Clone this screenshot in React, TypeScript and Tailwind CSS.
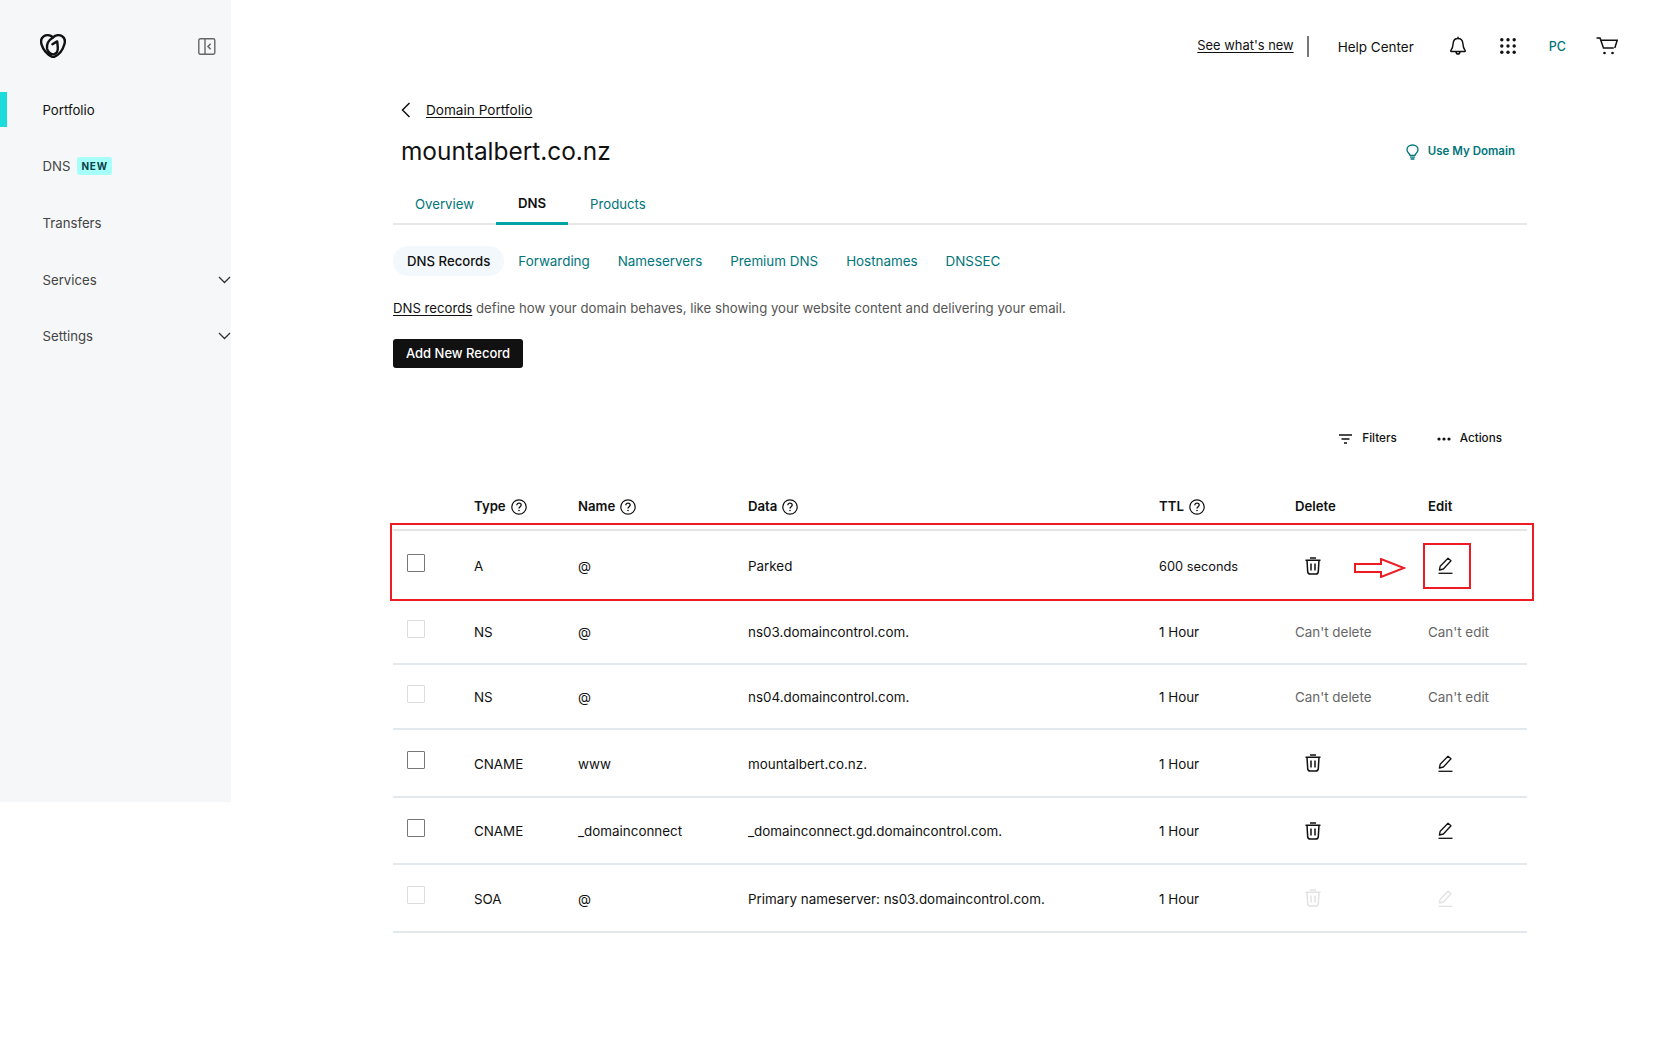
import React from "react";

const Logo = () => (
  <svg width="26" height="24" viewBox="0 0 26 24" fill="none" stroke="#111" strokeWidth="2.400" strokeLinecap="round" strokeLinejoin="round">
    <path d="M13 3.400C10.400 1 6.400.6 3.800 2.200 1.200 3.800.6 7.200 1.600 10.600 3 15.800 7.600 20.800 11.800 22.600c1 .4 1.800.4 2.800 0 4.200-1.800 8.200-6.800 9.600-11.800C25.400 7.200 24.800 3.800 22.200 2.200 19.600.6 15.600 1 13 3.400Z" />
    <path d="M13 3.400C8.800 6 6.400 10 7 14.400c.6 3.400 3.400 6.200 6.600 6 2.800-.6 4.400-3.600 4.200-7l-.6-6-4.800 2.800" />
  </svg>
);

const Collapse = () => (
  <svg width="18" height="17" viewBox="0 0 18 17" fill="none" stroke="#666" strokeWidth="1.400">
    <rect x="0.800" y="0.800" width="16" height="15.400" rx="1.400" />
    <path d="M7 1v15" />
    <path d="M12.600 5.800l-2.600 2.700 2.600 2.700" strokeWidth="1.500" />
  </svg>
);

const Chevron = () => (
  <svg width="13" height="8" viewBox="0 0 13 8" fill="none" stroke="#333" strokeWidth="1.300">
    <path d="M1 1l5.500 5.500L12 1" />
  </svg>
);

const Bell = () => (
  <svg width="16" height="19" viewBox="0 0 16 19" fill="none" stroke="#111" strokeWidth="1.500" strokeLinejoin="round">
    <path d="M8 .8v1.600M8 2.400c-3 0-4.600 2.200-4.800 4.800-.2 3-.6 5.200-2.400 7.400-.3.4 0 .8.400.8h13.600c.4 0 .7-.4.400-.8-1.800-2.200-2.200-4.400-2.400-7.400C12.600 4.600 11 2.400 8 2.400Z" />
    <path d="M6 15.600c.1 1.400.8 2.400 2 2.400s1.900-1 2-2.400" />
  </svg>
);

const Dots = () => (
  <svg width="16" height="16" viewBox="0 0 16 16" fill="#111">
    {[1.800, 8, 14.200].flatMap((y) =>
      [1.800, 8, 14.200].map((x) => <circle key={`${x}-${y}`} cx={x} cy={y} r="1.700" />)
    )}
  </svg>
);

const Cart = () => (
  <svg width="22" height="18" viewBox="0 0 22 18" fill="none" stroke="#111" strokeWidth="1.500">
    <path d="M0.500 1h3.500l3.500 10h10.300" />
    <path d="M4.800 3.200h16.400l-2.400 7.800" />
    <circle cx="8.500" cy="16" r="1.300" fill="#111" stroke="none" />
    <circle cx="16.500" cy="16" r="1.300" fill="#111" stroke="none" />
  </svg>
);

const Bulb = () => (
  <svg width="13" height="16" viewBox="0 0 13 16" fill="none" stroke="#00757a" strokeWidth="1.300">
    <path d="M4 11.300C3.800 9.400 1 8.600 1 5.800 1 3 3.300 1 6.500 1S12 3 12 5.800c0 2.800-2.800 3.600-3 5.500H4Z" />
    <path d="M4 13.200h5M4.600 15h3.800" />
  </svg>
);

const BackChevron = () => (
  <svg width="10" height="16" viewBox="0 0 10 16" fill="none" stroke="#111" strokeWidth="1.500">
    <path d="M8.500 1L1.500 8l7 7" />
  </svg>
);

const FilterIcon = () => (
  <svg width="13" height="10" viewBox="0 0 13 10" fill="none" stroke="#111" strokeWidth="1.300">
    <path d="M0 1h13M2.500 5h8M5 9h3" />
  </svg>
);

const More = () => (
  <svg width="14" height="4" viewBox="0 0 14 4" fill="#111">
    <circle cx="2" cy="2" r="1.600" />
    <circle cx="7" cy="2" r="1.600" />
    <circle cx="12" cy="2" r="1.600" />
  </svg>
);

const Help = () => (
  <svg width="16" height="16" viewBox="0 0 16 16" fill="none" stroke="#111" strokeWidth="1.200">
    <circle cx="8" cy="8" r="7.200" />
    <path d="M5.800 6.300c0-1.300 1-2.100 2.200-2.100s2.200.8 2.200 1.900c0 1.600-2.200 1.600-2.200 3.400" strokeWidth="1.300" />
    <circle cx="8" cy="11.500" r="0.800" fill="#111" stroke="none" />
  </svg>
);

const Trash = ({ c = "#111" }: { c?: string }) => (
  <svg width="16" height="18" viewBox="0 0 16 18" fill="none" stroke={c} strokeWidth="1.500">
    <path d="M0.500 3.200h15M5 1h6" />
    <path d="M2 3.200l.7 11.400c.1 1.300 1 2.400 2.400 2.400h5.800c1.400 0 2.300-1.100 2.400-2.400L14 3.200" />
    <path d="M6 6.500v7M10 6.500v7" />
  </svg>
);

const Pencil = ({ c = "#111" }: { c?: string }) => (
  <svg width="15" height="17" viewBox="0 0 15 17" fill="none" stroke={c} strokeWidth="1.300" strokeLinejoin="round">
    <path d="M10 1.200l3 2.600-7.600 8.200-4 1 .8-3.800L10 1.200Z" />
    <path d="M0.500 16.300h14" />
  </svg>
);

type Row = {
  type: string;
  name: string;
  data: string;
  ttl: string;
  h: string;
  cant?: boolean;
  faded?: boolean;
  box: string;
};

const rows: Row[] = [
  { type: "A", name: "@", data: "Parked", ttl: "600 seconds", h: "h-[69px]", box: "border-[#777]" },
  { type: "NS", name: "@", data: "ns03.domaincontrol.com.", ttl: "1 Hour", h: "h-[65px]", cant: true, box: "border-[#ddd]" },
  { type: "NS", name: "@", data: "ns04.domaincontrol.com.", ttl: "1 Hour", h: "h-[65px]", cant: true, box: "border-[#ddd]" },
  { type: "CNAME", name: "www", data: "mountalbert.co.nz.", ttl: "1 Hour", h: "h-[68px]", box: "border-[#777]" },
  { type: "CNAME", name: "_domainconnect", data: "_domainconnect.gd.domaincontrol.com.", ttl: "1 Hour", h: "h-[67px]", box: "border-[#777]" },
  { type: "SOA", name: "@", data: "Primary nameserver: ns03.domaincontrol.com.", ttl: "1 Hour", h: "h-[68px]", faded: true, box: "border-[#ddd]" },
];

const cols = "grid grid-cols-[81px_104px_170px_411px_136px_133px_98px] items-center";

const nav = [
  { label: "Portfolio", active: true },
  { label: "DNS", badge: true },
  { label: "Transfers" },
  { label: "Services", chevron: true },
  { label: "Settings", chevron: true },
];

export default function App() {
  return (
    <div className="flex min-h-[1038px] bg-white text-[13.400px] text-[#111] font-['Inter','Liberation_Sans',sans-serif]">
      <aside className="w-[231px] h-[802px] shrink-0 bg-[#f5f7f8]">
        <div className="h-[81.500px] pl-[40px] pr-[15px] pt-[34px] flex justify-between items-start">
          <Logo />
          <div className="pt-[4px]">
            <Collapse />
          </div>
        </div>
        {nav.map((n) => (
          <div key={n.label} className="h-[56.600px] flex items-center">
            <div className={`w-[7px] h-[35px] ${n.active ? "bg-[#1bdbdb]" : ""}`} />
            <span className={`ml-[35.500px] pt-[2px] text-[13.200px] ${n.active ? "text-[#111]" : "text-[#444]"}`}>{n.label}</span>
            {n.badge && (
              <span className="ml-[7px] h-[18px] px-[4px] rounded-[3px] bg-[#a6fff8] text-[10px] font-bold tracking-[0.800px] text-[#09404a] flex items-center">
                NEW
              </span>
            )}
            {n.chevron && (
              <span className="ml-auto flex">
                <Chevron />
              </span>
            )}
          </div>
        ))}
      </aside>

      <main className="flex-1 min-w-0">
        <header className="h-[92px] pr-[42px] flex items-center justify-end">
          <a className="text-[12.900px] underline underline-offset-2">See what's new</a>
          <div className="ml-[13px] w-[2px] h-[21px] bg-[#777]" />
          <span className="ml-[29px] pt-[2px] text-[13.500px]">Help Center</span>
          <span className="ml-[36px] -mt-[2px] flex"><Bell /></span>
          <span className="ml-[34px] flex"><Dots /></span>
          <span className="ml-[33px] pt-[2px] text-[12.500px] font-medium text-[#00757a]">PC</span>
          <span className="ml-[30px] flex"><Cart /></span>
        </header>

        <div className="pl-[162px] pr-[133px]">
          <div className="h-[36px] flex items-center">
            <span className="ml-[8px] flex"><BackChevron /></span>
            <a className="ml-[15px] text-[13.600px] underline underline-offset-2">Domain Portfolio</a>
          </div>
          <div className="h-[47px] flex items-center justify-between pr-[12px]">
            <h1 className="ml-[8px] text-[24.400px] font-normal">mountalbert.co.nz</h1>
            <span className="flex items-center gap-[9px] text-[11.500px] font-semibold text-[#00757a]">
              <Bulb />
              Use My Domain
            </span>
          </div>

          <div className="h-[50px] flex border-b-[2px] border-[#e8e8e8] text-[13.200px]">
            <div className="px-[22px] pt-[20px] h-[50px] text-[#00757a]">Overview</div>
            <div className="px-[22px] pt-[19px] h-[50px] border-b-[3px] border-[#00a4a6] font-semibold">DNS</div>
            <div className="px-[22px] pt-[20px] h-[50px] text-[#00757a]">Products</div>
          </div>

          <div className="mt-[21px] h-[30px] flex text-[13.400px]">
            <div className="px-[14px] pt-[1px] flex items-center rounded-full bg-[#f3f8fc] font-medium text-[13.200px]">DNS Records</div>
            {["Forwarding", "Nameservers", "Premium DNS", "Hostnames", "DNSSEC"].map((t) => (
              <div key={t} className="px-[14px] pt-[1px] flex items-center text-[#00757a]">{t}</div>
            ))}
          </div>

          <p className="mt-[22px] h-[20px] leading-[20px] text-[#555] text-[13.200px]">
            <a className="underline underline-offset-2 text-[#111]">DNS records</a> define how your domain behaves, like showing your website content and delivering your email.
          </p>

          <button className="mt-[21px] h-[29px] pt-[1px] w-[130px] rounded-[3px] bg-[#111] text-white font-medium text-[13px]">Add New Record</button>

          <div className="mt-[61px] h-[20px] flex items-center justify-end pr-[25px] text-[11.700px] font-medium">
            <span className="flex"><FilterIcon /></span>
            <span className="ml-[10px]">Filters</span>
            <span className="ml-[40px] flex"><More /></span>
            <span className="ml-[9px]">Actions</span>
          </div>

          <div className={`${cols} mt-[48px] h-[20px] font-semibold text-[13.200px]`}>
            <div />
            <div className="flex items-center gap-[5px]">Type <Help /></div>
            <div className="flex items-center gap-[5px]">Name <Help /></div>
            <div className="flex items-center gap-[5px]">Data <Help /></div>
            <div className="flex items-center gap-[5px]">TTL <Help /></div>
            <div>Delete</div>
            <div>Edit</div>
          </div>

          <div className="relative mt-[12px] border-t-[2px] border-[#e4e4e4]">
            {rows.map((r, i) => (
              <div key={i} className={`${cols} ${r.h} ${i > 0 ? "border-b-[2px] border-[#e3e8ed]" : ""}`}>
                <div className={`ml-[14px] -mt-[6px] w-[18px] h-[18px] border-[1.500px] rounded-[1px] ${r.box}`} />
                <div className="pt-[2px]">{r.type}</div>
                <div className="pt-[2px]">{r.name}</div>
                <div className="pt-[2px]">{r.data}</div>
                <div className={i === 0 ? "pt-[2px] text-[12.800px]" : "pt-[2px]"}>{r.ttl}</div>
                {r.cant ? (
                  <>
                    <div className="pt-[2px] text-[#666]">Can't delete</div>
                    <div className="pt-[2px] text-[#666]">Can't edit</div>
                  </>
                ) : (
                  <>
                    <div className="pl-[10px] flex"><Trash c={r.faded ? "#e2e2e2" : "#111"} /></div>
                    <div className="pl-[10px] flex"><Pencil c={r.faded ? "#e2e2e2" : "#111"} /></div>
                  </>
                )}
              </div>
            ))}
            <div className="absolute left-[-3px] top-[-8px] w-[1144px] h-[78px] border-[2px] border-[#ed1c24] pointer-events-none" />
            <div className="absolute left-[1030px] top-[12px] w-[48px] h-[46px] border-[2px] border-[#ed1c24] pointer-events-none" />
            <svg className="absolute left-[961px] top-[27px]" width="52" height="20" viewBox="0 0 52 20" fill="#fff" stroke="#ed1c24" strokeWidth="2">
              <path d="M1 6h26V1l23 9-23 9v-5H1Z" />
            </svg>
          </div>
        </div>
      </main>
    </div>
  );
}
